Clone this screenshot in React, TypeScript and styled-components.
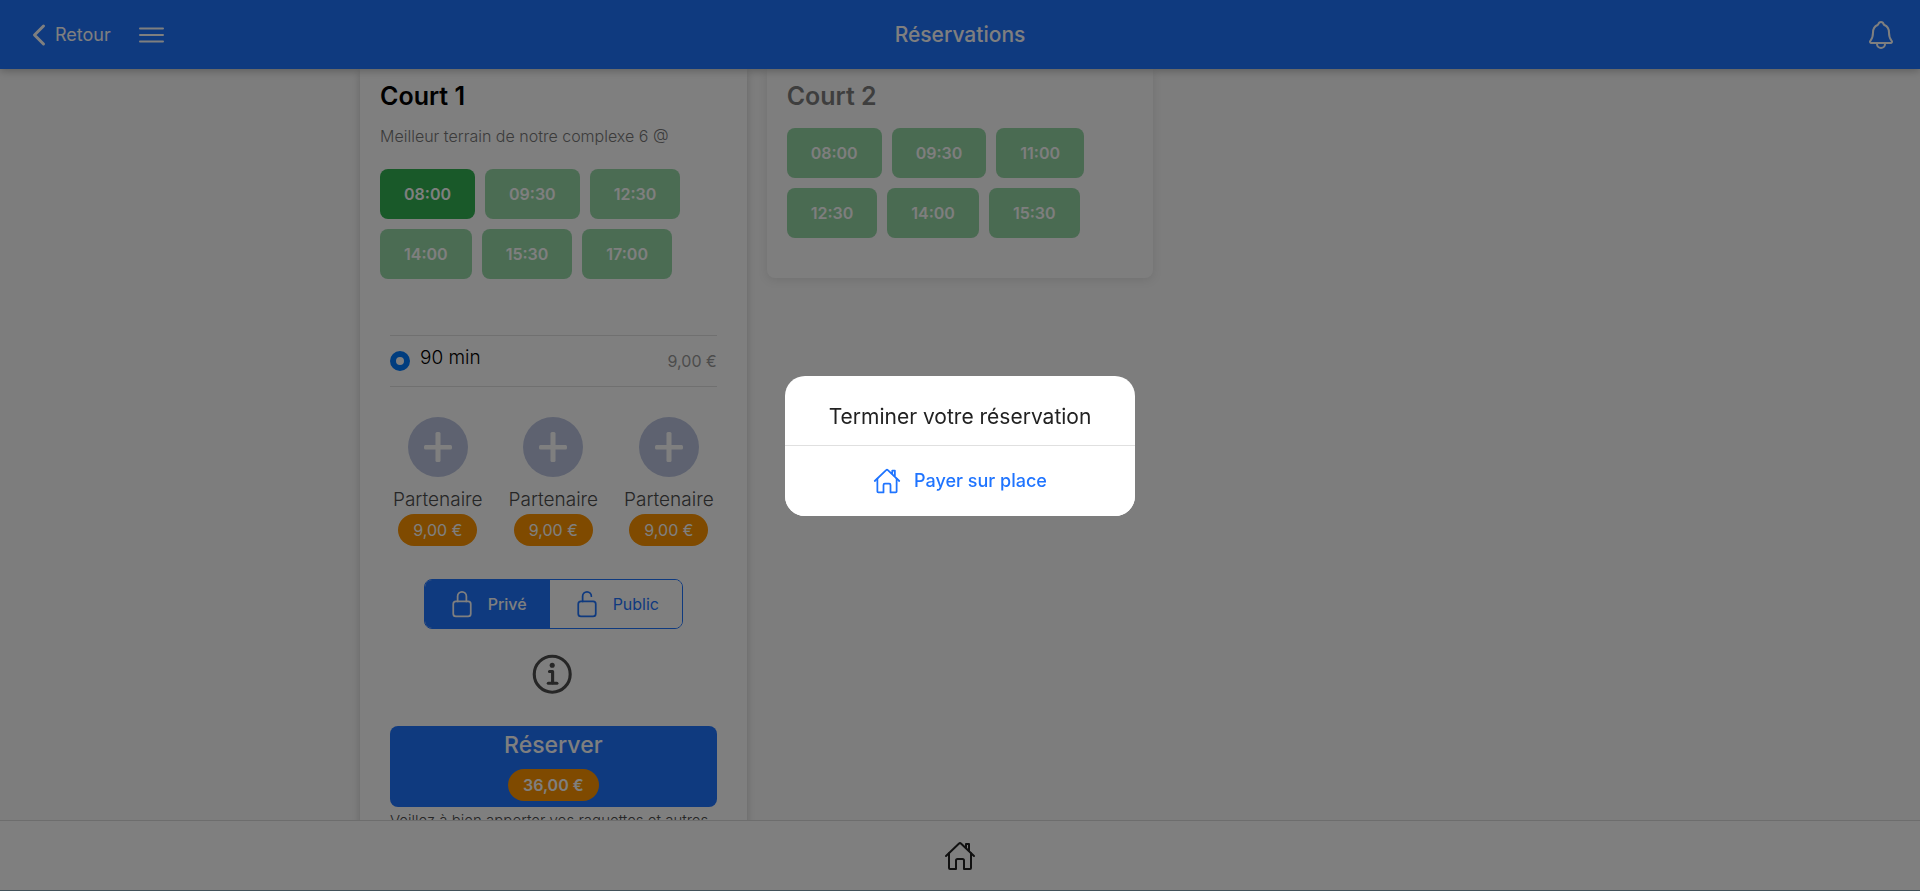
import React, { useState } from 'react';
import styled, { createGlobalStyle, css } from 'styled-components';
import {
  IoChevronBack,
  IoHomeOutline,
  IoInformationCircleOutline,
  IoLockClosedOutline,
  IoLockOpenOutline,
  IoNotificationsOutline,
} from 'react-icons/io5';

const color = {
  primary: '#1f74ff',
  success: '#32b352',
  warning: '#ff9500',
  radio: '#007aff',
  line: '#e0e0e0',
};

const GlobalStyle = createGlobalStyle`
  * { box-sizing: border-box; }
  body {
    margin: 0;
    background: #fafafa;
    color: #000;
    font-family: Inter, "Liberation Sans", sans-serif;
    font-size: 16px;
  }
  button { font: inherit; border: 0; padding: 0; cursor: pointer; }
  h1, h2, p { margin: 0; }
`;

const Page = styled.div`
  display: flex;
  flex-direction: column;
  height: 100vh;
  overflow: hidden;
  border-bottom: 1px solid #86a4b4;
`;

const Header = styled.header`
  display: grid;
  grid-template-columns: 1fr auto 1fr;
  align-items: center;
  flex: none;
  height: 69px;
  padding: 0 23px;
  background: ${color.primary};
  color: #fff;
  box-shadow: 0 2px 8px rgba(0, 0, 0, 0.25);
  z-index: 1;
`;

const HeaderSide = styled.div<{ $end?: boolean }>`
  display: flex;
  align-items: center;
  gap: 28px;
  justify-content: ${({ $end }) => ($end ? 'flex-end' : 'flex-start')};
`;

const HeaderButton = styled.button`
  display: flex;
  align-items: center;
  background: none;
  color: #fff;
  font-size: 18px;
  line-height: 24px;
`;

const HeaderTitle = styled.h1`
  font-size: 21px;
  font-weight: 500;
  line-height: 24px;
`;

const Content = styled.main`
  flex: 1;
  min-height: 0;
  overflow: hidden;
`;

const Courts = styled.div`
  display: grid;
  grid-template-columns: repeat(3, 1fr);
  align-items: start;
  gap: 20px;
  max-width: 1220px;
  margin: 0 auto;
  padding: 0 10px;
`;

const Card = styled.section<{ $dimmed?: boolean }>`
  padding: 11px 20px 40px;
  background: #fff;
  border-radius: 0 0 8px 8px;
  box-shadow: 0 2px 8px rgba(0, 0, 0, 0.18);
  opacity: ${({ $dimmed }) => ($dimmed ? 0.5 : 1)};
`;

const CourtName = styled.h2`
  font-size: 25px;
  font-weight: 600;
  line-height: 32px;
`;

const CourtNote = styled.p`
  margin: 14px 0 0;
  color: #777;
  font-size: 16px;
  font-weight: 300;
  line-height: 20px;
`;

const Slots = styled.div`
  display: flex;
  flex-wrap: wrap;
  gap: 10px;
  max-width: 320px;
  margin-top: 16px;

  ${CourtNote} + & {
    margin-top: 23px;
  }
`;

const Slot = styled.button<{ $faded?: boolean }>`
  height: 50px;
  padding: 0 24px;
  border-radius: 8px;
  background: ${color.success};
  color: #fff;
  font-weight: 600;
  opacity: ${({ $faded }) => ($faded ? 0.5 : 1)};
`;

const Booking = styled.div`
  display: flex;
  flex-direction: column;
  margin-top: 56px;
  padding: 0 10px;
`;

const Duration = styled.label`
  display: flex;
  align-items: center;
  height: 52px;
  border: solid ${color.line};
  border-width: 1px 0;
`;

const Radio = styled.input`
  appearance: none;
  width: 20px;
  height: 20px;
  margin: 0 10px 0 0;
  border-radius: 50%;
  border: 6px solid ${color.radio};
  background: #fff;
`;

const DurationText = styled.span`
  flex: 1;
  padding-bottom: 6px;
  font-size: 19px;
  font-weight: 300;
  line-height: 24px;
`;

const Price = styled.span`
  color: #999;
  line-height: 20px;
`;

const Partners = styled.div`
  display: flex;
  justify-content: space-between;
  margin-top: 30px;
  padding: 0 3px;
`;

const Partner = styled.div`
  display: flex;
  flex-direction: column;
  align-items: center;
`;

const AddButton = styled.button`
  display: flex;
  align-items: center;
  justify-content: center;
  width: 60px;
  height: 60px;
  border-radius: 50%;
  background: #bcc5e1;
  color: #fff;
`;

const PartnerName = styled.span`
  margin: 11px 0 2px;
  color: #4c4c4c;
  font-size: 19px;
  font-weight: 300;
  line-height: 24px;
`;

const Badge = styled.span<{ $strong?: boolean }>`
  padding: 6px 15px;
  border-radius: 16px;
  background: ${color.warning};
  color: #fff;
  font-size: 16px;
  font-weight: ${({ $strong }) => ($strong ? 600 : 400)};
  line-height: 20px;
`;

const Segment = styled.div`
  display: flex;
  align-self: center;
  height: 50px;
  margin-top: 33px;
  border: 1px solid ${color.primary};
  border-radius: 8px;
  overflow: hidden;
`;

const SegmentButton = styled.button<{ $active: boolean }>`
  display: flex;
  align-items: center;
  gap: 12px;
  padding: 0 23px;
  background: #fff;
  color: ${color.primary};
  ${({ $active }) =>
    $active &&
    css`
      background: ${color.primary};
      color: #fff;
      font-weight: 500;
    `}
`;

const InfoButton = styled.button`
  display: flex;
  align-self: center;
  margin: 21px 0 26px;
  background: none;
  color: #4c4c4c;
`;

const BookButton = styled.button`
  display: flex;
  flex-direction: column;
  align-items: center;
  gap: 10px;
  padding: 5px 0 6px;
  border-radius: 8px;
  background: ${color.primary};
  color: #fff;
  font-size: 23px;
  font-weight: 500;
  line-height: 28px;
`;

const Reminder = styled.p`
  margin-top: 4px;
  color: #4c4c4c;
  font-size: 15px;
  font-weight: 300;
  line-height: 20px;
`;

const Footer = styled.footer`
  display: flex;
  align-items: center;
  justify-content: center;
  flex: none;
  height: 70px;
  border-top: 1px solid #dadada;
  background: #fff;
  z-index: 1;
`;

const HomeLink = styled.a`
  display: flex;
  color: #222;
`;

const Backdrop = styled.div`
  position: fixed;
  inset: 0;
  z-index: 10;
  display: flex;
  align-items: center;
  justify-content: center;
  background: rgba(0, 0, 0, 0.5);
`;

const Dialog = styled.div`
  width: 350px;
  border-radius: 20px;
  overflow: hidden;
  background: #fff;
  text-align: center;
`;

const DialogTitle = styled.h2`
  padding: 28px 16px 16px;
  border-bottom: 1px solid ${color.line};
  color: #222;
  font-size: 21px;
  font-weight: 400;
  line-height: 25px;
`;

const DialogAction = styled.button`
  display: flex;
  align-items: center;
  justify-content: center;
  gap: 13px;
  width: 100%;
  height: 70px;
  background: #fff;
  color: ${color.primary};
  font-size: 18px;
  font-weight: 500;
`;

const slots1 = ['08:00', '09:30', '12:30', '14:00', '15:30', '17:00'];
const slots2 = ['08:00', '09:30', '11:00', '12:30', '14:00', '15:30'];

function MenuIcon() {
  return (
    <svg width="25" height="16" viewBox="0 0 25 16" fill="none" stroke="currentColor" strokeWidth="2" strokeLinecap="round" aria-hidden="true">
      <path d="M1 1.5h23M1 8h23M1 14.5h23" />
    </svg>
  );
}

function PlusIcon() {
  return (
    <svg width="30" height="30" viewBox="0 0 30 30" fill="currentColor" aria-hidden="true">
      <rect x="12.5" y="0" width="5" height="30" rx="1.5" />
      <rect x="1" y="13" width="28" height="4.4" rx="1.5" />
    </svg>
  );
}

export default function App() {
  const [selected, setSelected] = useState('08:00');
  const [isPrivate, setPrivate] = useState(true);

  return (
    <>
      <GlobalStyle />
      <Page>
        <Header>
          <HeaderSide>
            <HeaderButton type="button">
              <IoChevronBack size={32} />
              Retour
            </HeaderButton>
            <HeaderButton type="button" aria-label="Menu">
              <MenuIcon />
            </HeaderButton>
          </HeaderSide>
          <HeaderTitle>Réservations</HeaderTitle>
          <HeaderSide $end>
            <HeaderButton type="button" aria-label="Notifications">
              <IoNotificationsOutline size={32} />
            </HeaderButton>
          </HeaderSide>
        </Header>

        <Content>
          <Courts>
            <Card>
              <CourtName>Court 1</CourtName>
              <CourtNote>Meilleur terrain de notre complexe 6 @</CourtNote>
              <Slots>
                {slots1.map((time) => (
                  <Slot key={time} type="button" $faded={time !== selected} onClick={() => setSelected(time)}>
                    {time}
                  </Slot>
                ))}
              </Slots>
              <Booking>
                <Duration>
                  <Radio type="radio" name="duration" defaultChecked />
                  <DurationText>90 min</DurationText>
                  <Price>9,00 €</Price>
                </Duration>
                <Partners>
                  {[1, 2, 3].map((n) => (
                    <Partner key={n}>
                      <AddButton type="button" aria-label="Ajouter un partenaire">
                        <PlusIcon />
                      </AddButton>
                      <PartnerName>Partenaire</PartnerName>
                      <Badge>9,00 €</Badge>
                    </Partner>
                  ))}
                </Partners>
                <Segment>
                  <SegmentButton type="button" $active={isPrivate} onClick={() => setPrivate(true)}>
                    <IoLockClosedOutline size={28} />
                    Privé
                  </SegmentButton>
                  <SegmentButton type="button" $active={!isPrivate} onClick={() => setPrivate(false)}>
                    <IoLockOpenOutline size={28} />
                    Public
                  </SegmentButton>
                </Segment>
                <InfoButton type="button" aria-label="Informations">
                  <IoInformationCircleOutline size={50} />
                </InfoButton>
                <BookButton type="button">
                  Réserver
                  <Badge $strong>36,00 €</Badge>
                </BookButton>
                <Reminder>Veillez à bien apporter vos raquettes et autres</Reminder>
              </Booking>
            </Card>

            <Card $dimmed>
              <CourtName>Court 2</CourtName>
              <Slots>
                {slots2.map((time) => (
                  <Slot key={time} type="button">
                    {time}
                  </Slot>
                ))}
              </Slots>
            </Card>
          </Courts>
        </Content>

        <Footer>
          <HomeLink href="#" aria-label="Accueil">
            <IoHomeOutline size={32} />
          </HomeLink>
        </Footer>
      </Page>

      <Backdrop>
        <Dialog role="dialog" aria-modal="true" aria-labelledby="dialog-title">
          <DialogTitle id="dialog-title">Terminer votre réservation</DialogTitle>
          <DialogAction type="button">
            <IoHomeOutline size={28} />
            Payer sur place
          </DialogAction>
        </Dialog>
      </Backdrop>
    </>
  );
}
